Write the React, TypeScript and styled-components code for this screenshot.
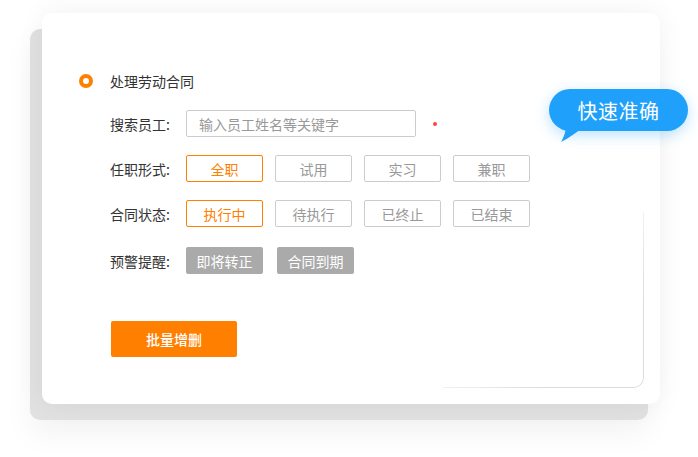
import styled, { createGlobalStyle } from 'styled-components'

const GlobalStyle = createGlobalStyle`
  body {
    margin: 0;
    background: #fff;
    font-family: "Noto Sans CJK SC", "Noto Sans", sans-serif;
  }
`

const Stage = styled.div`
  position: relative;
  width: 698px;
  height: 457px;
  overflow: hidden;
  background: #fff;
`

const CardStack = styled.div`
  display: grid;
  width: 630px;
  height: 407px;
  margin: 13px 0 0 30px;
`

const BackCard = styled.div`
  grid-area: 1 / 1;
  align-self: end;
  justify-self: start;
  width: 618px;
  height: 391px;
  border-radius: 10px;
  background: #e1e1e1;
  box-shadow: 0 14px 30px rgba(0, 0, 0, 0.05);
`

const FrontCard = styled.div`
  grid-area: 1 / 1;
  align-self: start;
  justify-self: end;
  position: relative;
  box-sizing: border-box;
  width: 618px;
  height: 391px;
  padding: 58px 0 0 37px;
  border-radius: 10px;
  background: #fff;
  box-shadow: 0 0 28px rgba(0, 0, 0, 0.06);
`

const InnerPanel = styled.div`
  position: absolute;
  right: 16px;
  bottom: 16px;
  width: 200px;
  height: 175px;
  border-right: 1px solid #dcdcdc;
  border-bottom: 1px solid #dcdcdc;
  border-bottom-right-radius: 10px;
  -webkit-mask-image: radial-gradient(ellipse at 100% 100%, #000 35%, transparent 95%);
  mask-image: radial-gradient(ellipse at 100% 100%, #000 35%, transparent 95%);
`

const Header = styled.div`
  display: flex;
  align-items: center;
  gap: 17px;
  height: 20px;
  font-size: 14px;
  color: #333;
`

const Radio = styled.span`
  box-sizing: border-box;
  width: 14px;
  height: 14px;
  border: 4px solid #ff8000;
  border-radius: 50%;
`

const Form = styled.div`
  display: flex;
  flex-direction: column;
  margin-left: 31px;
`

const Row = styled.div<{ $top: number }>`
  display: flex;
  align-items: center;
  height: 27px;
  margin-top: ${(p) => p.$top}px;
`

const Label = styled.span`
  width: 76px;
  font-size: 14px;
  color: #333;
  white-space: nowrap;
`

const SearchInput = styled.input`
  box-sizing: border-box;
  width: 230px;
  height: 27px;
  padding: 0 12px;
  border: 1px solid #ccc;
  border-radius: 2px;
  font-family: inherit;
  font-size: 14px;
  color: #333;
  outline: none;

  &::placeholder {
    color: #999;
  }
`

const Required = styled.span`
  width: 4px;
  height: 4px;
  margin-left: 17px;
  border-radius: 50%;
  background: #f44;
`

const Options = styled.div<{ $gap: number }>`
  display: flex;
  gap: ${(p) => p.$gap}px;
`

const Option = styled.button<{ $active?: boolean }>`
  box-sizing: border-box;
  width: 77px;
  height: 27px;
  padding: 0;
  border: 1px solid ${(p) => (p.$active ? '#ff8000' : '#ccc')};
  border-radius: 2px;
  background: #fff;
  font-family: inherit;
  font-size: 14px;
  color: ${(p) => (p.$active ? '#ff8000' : '#999')};
`

const Tag = styled.span`
  display: flex;
  align-items: center;
  justify-content: center;
  width: 77px;
  height: 27px;
  border-radius: 2px;
  background: #aaa;
  font-size: 14px;
  color: #fff;
`

const BatchButton = styled.button`
  align-self: flex-start;
  width: 126px;
  height: 36px;
  margin: 47px 0 0 1px;
  padding: 0;
  border: none;
  border-radius: 2px;
  background: #ff8000;
  font-family: inherit;
  font-size: 14px;
  font-weight: 500;
  color: #fff;
`

const Bubble = styled.div`
  position: absolute;
  left: 549px;
  top: 89px;
  display: flex;
  align-items: center;
  justify-content: center;
  width: 139px;
  height: 42px;
  border-radius: 21px;
  background: #1fa0fa;
  box-shadow: 0 4px 14px rgba(31, 160, 250, 0.3);
  font-size: 20px;
  color: #fff;
  letter-spacing: 0.5px;
`

const Tail = styled.svg`
  position: absolute;
  left: 10px;
  top: 33px;
`

const types = ['全职', '试用', '实习', '兼职']
const states = ['执行中', '待执行', '已终止', '已结束']
const alerts = ['即将转正', '合同到期']

export default function App() {
  return (
    <Stage>
      <GlobalStyle />
      <CardStack>
        <BackCard />
        <FrontCard>
          <InnerPanel />
          <Header>
            <Radio />
            处理劳动合同
          </Header>
          <Form>
            <Row $top={19}>
              <Label>搜索员工:</Label>
              <SearchInput placeholder="输入员工姓名等关键字" />
              <Required />
            </Row>
            <Row $top={18}>
              <Label>任职形式:</Label>
              <Options $gap={12}>
                {types.map((t, i) => (
                  <Option key={t} $active={i === 0}>
                    {t}
                  </Option>
                ))}
              </Options>
            </Row>
            <Row $top={18}>
              <Label>合同状态:</Label>
              <Options $gap={12}>
                {states.map((t, i) => (
                  <Option key={t} $active={i === 0}>
                    {t}
                  </Option>
                ))}
              </Options>
            </Row>
            <Row $top={20}>
              <Label>预警提醒:</Label>
              <Options $gap={14}>
                {alerts.map((t) => (
                  <Tag key={t}>{t}</Tag>
                ))}
              </Options>
            </Row>
            <BatchButton>批量增删</BatchButton>
          </Form>
        </FrontCard>
      </CardStack>
      <Bubble>
        快速准确
        <Tail width="28" height="22" viewBox="0 0 28 22">
          <path d="M6 0 L26 4 C18 10 10 16 2 20 C6 13 8 6 6 0 Z" fill="#1fa0fa" />
        </Tail>
      </Bubble>
    </Stage>
  )
}
